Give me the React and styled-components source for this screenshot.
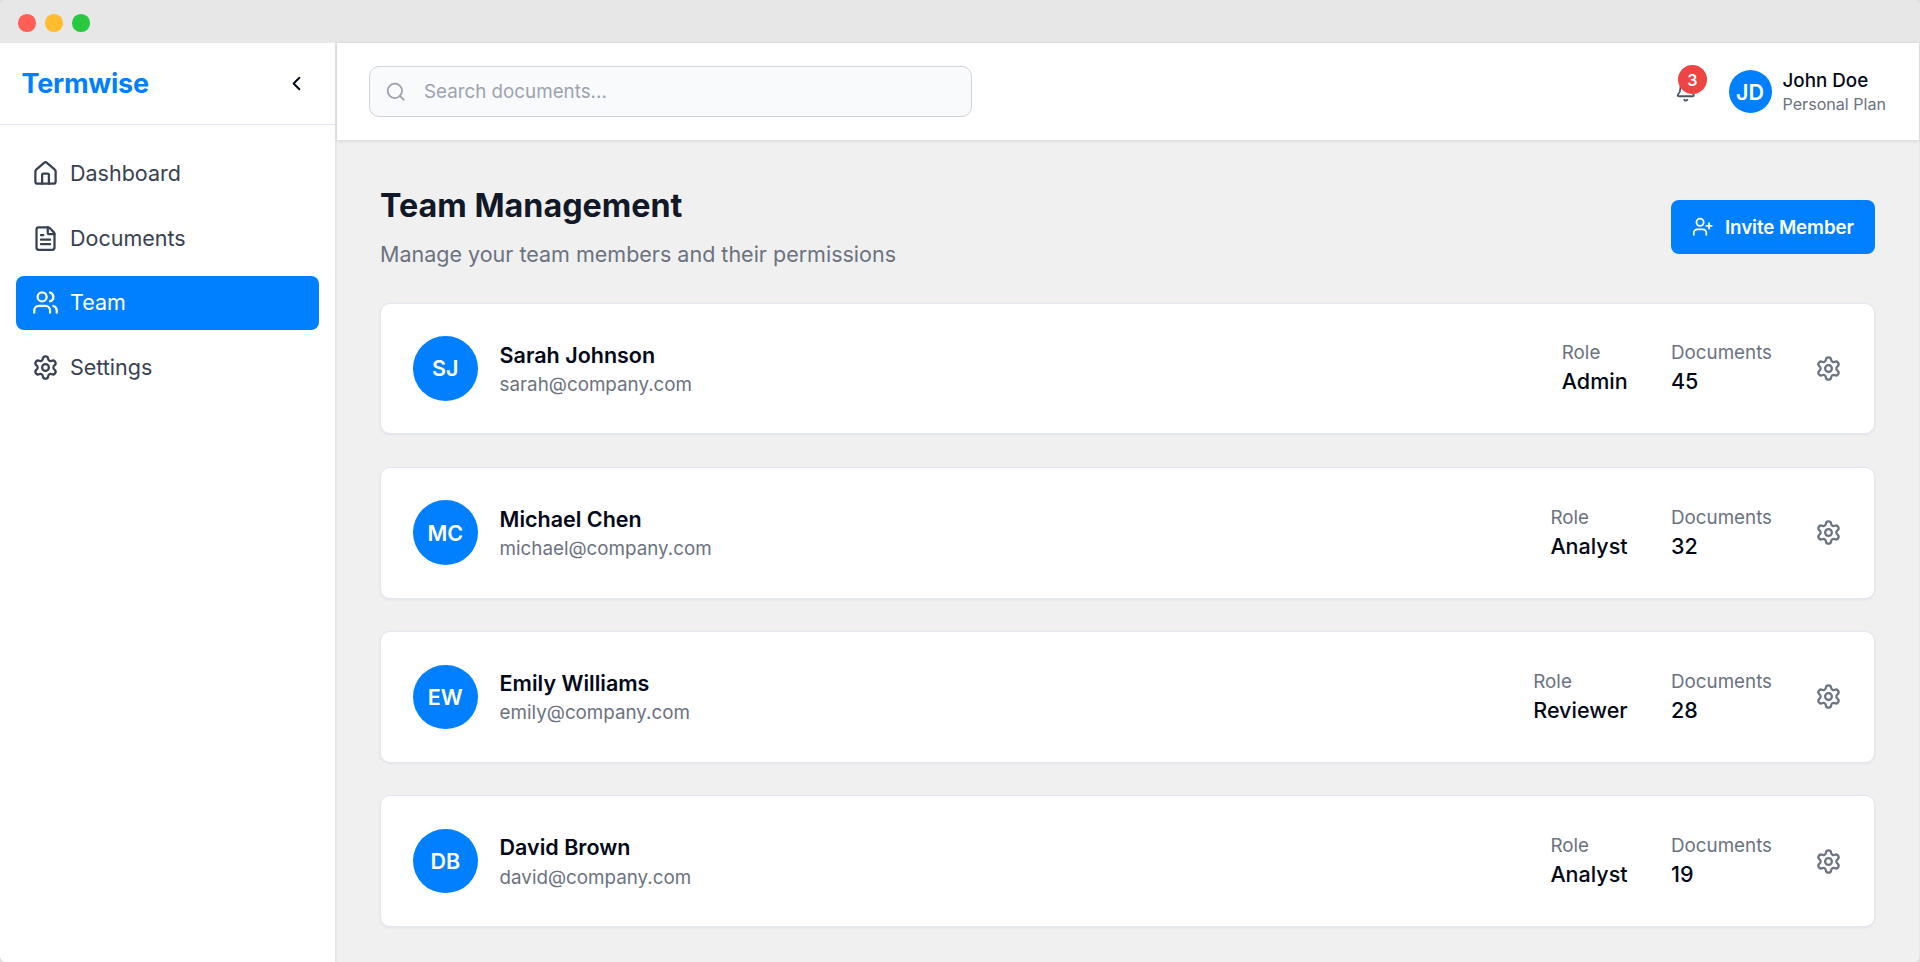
import React from 'react';
import styled, { createGlobalStyle } from 'styled-components';
import {
    House,
    FileText,
    Users,
    Settings,
    ChevronLeft,
    Search,
    Bell,
    UserPlus,
} from 'lucide-react';


const GlobalStyle = createGlobalStyle`
    * {
        box-sizing: border-box;
    }

    body {
        margin: 0;
        background: #dcdcdc;
        font-family: Inter, sans-serif;
        color: #020817;
        overflow: hidden;
    }

    button {
        font-family: inherit;
        border: none;
        background: none;
        padding: 0;
    }
`;

const Window = styled.div`
    display: flex;
    flex-direction: column;
    height: 962px;
    border-radius: 6px;
    overflow: hidden;
    background: #f0f0f0;
`;

const TitleBar = styled.div`
    display: flex;
    align-items: center;
    gap: 9.5px;
    flex: 0 0 43px;
    padding: 3px 0 0 18px;
    background: #e7e7e7;
`;

const Dot = styled.span`
    width: 17.5px;
    height: 17.5px;
    border-radius: 50%;
    background: ${(props) => props.$color};
`;

const Body = styled.div`
    display: flex;
    flex: 1;
    min-height: 0;
    border-right: 1px solid #e7e7e7;
`;

const Sidebar = styled.aside`
    flex: 0 0 337px;
    background: #fff;
    border-right: 2px solid #e5e7eb;
`;

const SidebarHeader = styled.div`
    display: flex;
    align-items: center;
    justify-content: space-between;
    height: 82px;
    padding: 0 27.3px 0 21.5px;
    border-bottom: 1px solid #e2e8f0;
`;

const Logo = styled.h1`
    margin: 0;
    font-size: 27px;
    line-height: 38px;
    font-weight: 700;
    letter-spacing: -0.25px;
    color: #007fff;
`;

const CollapseButton = styled.button`
    display: flex;
    color: #020817;
`;

const Nav = styled.nav`
    display: flex;
    flex-direction: column;
    gap: 10.8px;
    padding: 21.6px 16px;
`;

const NavItem = styled.a`
    display: flex;
    align-items: center;
    gap: 11px;
    height: 53.8px;
    padding: 0 16px;
    border-radius: 8px;
    font-size: 21.5px;
    line-height: 33px;
    color: ${(props) => (props.$active ? '#fff' : '#374151')};
    background: ${(props) => (props.$active ? '#007fff' : 'transparent')};
`;

const Main = styled.main`
    flex: 1;
    display: flex;
    flex-direction: column;
    min-width: 0;
`;

const Header = styled.header`
    display: flex;
    align-items: center;
    justify-content: space-between;
    flex: 0 0 97px;
    padding: 0 33px 0 32px;
    background: #fff;
    box-shadow: 0 1px 4px rgba(0, 0, 0, 0.12);
`;

const SearchBox = styled.div`
    display: flex;
    align-items: center;
    gap: 17.5px;
    width: 603px;
    height: 51px;
    padding: 0 15px;
    border: 1px solid #d1d5db;
    border-radius: 10px;
    background: #f9fafb;
    font-size: 18.8px;
    color: #9ca3af;
`;

const HeaderRight = styled.div`
    display: flex;
    align-items: center;
    gap: 32px;
`;

const BellButton = styled.button`
    position: relative;
    display: flex;
    color: #4b5563;
`;

const Badge = styled.span`
    position: absolute;
    top: -16px;
    right: -10.7px;
    width: 29.6px;
    height: 29.6px;
    border-radius: 50%;
    background: #ef4444;
    color: #fff;
    font-size: 16px;
    font-weight: 600;
    line-height: 30px;
    text-align: center;
`;

const Profile = styled.div`
    display: flex;
    align-items: center;
    gap: 11px;
`;

const Avatar = styled.div`
    display: flex;
    align-items: center;
    justify-content: center;
    flex: none;
    width: ${(props) => props.$size}px;
    height: ${(props) => props.$size}px;
    border-radius: 50%;
    background: #007fff;
    color: #fff;
    font-size: 21.5px;
    line-height: 32px;
    font-weight: 600;
`;

const ProfileName = styled.div`
    font-size: 18.8px;
    line-height: 27px;
    font-weight: 500;
`;

const ProfilePlan = styled.div`
    font-size: 16.1px;
    line-height: 21.5px;
    color: #6b7280;
`;

const Content = styled.section`
    padding: 43.7px 43.6px 43px 43px;
`;

const PageHeader = styled.div`
    display: flex;
    align-items: center;
    justify-content: space-between;
    margin-bottom: 31.9px;
`;

const PageTitle = styled.h2`
    margin: 0 0 11px;
    font-size: 32.3px;
    line-height: 43px;
    font-weight: 700;
    color: #111827;
`;

const PageText = styled.p`
    margin: 0;
    font-size: 21.5px;
    line-height: 33px;
    color: #6b7280;
`;

const InviteButton = styled.button`
    display: flex;
    align-items: center;
    gap: 11px;
    height: 53.8px;
    padding: 0 21.5px;
    border-radius: 8px;
    background: #007fff;
    color: #fff;
    font-size: 18.8px;
    font-weight: 600;
    letter-spacing: -0.1px;
`;

const MemberList = styled.div`
    display: flex;
    flex-direction: column;
    gap: 32.4px;
`;

const MemberCard = styled.div`
    display: flex;
    align-items: center;
    justify-content: space-between;
    height: 131.8px;
    padding: 0 32px;
    border: 1px solid #e2e8f0;
    border-radius: 10px;
    background: #fff;
    box-shadow: 0 1px 3px rgba(0, 0, 0, 0.06);
`;

const Person = styled.div`
    display: flex;
    align-items: center;
    gap: 22px;
`;

const Name = styled.div`
    font-size: 21.5px;
    line-height: 32.3px;
    font-weight: 600;
`;

const Muted = styled.div`
    font-size: 18.8px;
    line-height: 27px;
    color: #6b7280;
`;

const Meta = styled.div`
    display: flex;
    align-items: center;
    gap: 43.4px;
`;

const Value = styled.div`
    font-size: 21.5px;
    line-height: 31px;
    font-weight: 500;
`;

const GearButton = styled.button`
    display: flex;
    color: #6b7280;
`;


const navItems = [
    { label: 'Dashboard', Icon: House },
    { label: 'Documents', Icon: FileText },
    { label: 'Team', Icon: Users, active: true },
    { label: 'Settings', Icon: Settings },
];

const members = [
    { initials: 'SJ', name: 'Sarah Johnson', email: 'sarah@company.com', role: 'Admin', documents: 45 },
    { initials: 'MC', name: 'Michael Chen', email: 'michael@company.com', role: 'Analyst', documents: 32 },
    { initials: 'EW', name: 'Emily Williams', email: 'emily@company.com', role: 'Reviewer', documents: 28 },
    { initials: 'DB', name: 'David Brown', email: 'david@company.com', role: 'Analyst', documents: 19 },
];


const Member = ({ initials, name, email, role, documents }) => (
    <MemberCard>
        <Person>
            <Avatar $size={64.6}>{initials}</Avatar>
            <div>
                <Name>{name}</Name>
                <Muted>{email}</Muted>
            </div>
        </Person>

        <Meta>
            <div>
                <Muted>Role</Muted>
                <Value>{role}</Value>
            </div>
            <div>
                <Muted>Documents</Muted>
                <Value>{documents}</Value>
            </div>
            <GearButton>
                <Settings size={27} />
            </GearButton>
        </Meta>
    </MemberCard>
);


export default function App() {
    return (
        <Window>
            <GlobalStyle />

            <TitleBar>
                <Dot $color="#ff5f57" />
                <Dot $color="#febc2e" />
                <Dot $color="#28c840" />
            </TitleBar>

            <Body>
                <Sidebar>
                    <SidebarHeader>
                        <Logo>Termwise</Logo>
                        <CollapseButton>
                            <ChevronLeft size={23} />
                        </CollapseButton>
                    </SidebarHeader>

                    <Nav>
                        {navItems.map(({ label, Icon, active }) => (
                            <NavItem key={label} $active={active}>
                                <Icon size={27} />
                                {label}
                            </NavItem>
                        ))}
                    </Nav>
                </Sidebar>

                <Main>
                    <Header>
                        <SearchBox>
                            <Search size={21.5} />
                            Search documents...
                        </SearchBox>

                        <HeaderRight>
                            <BellButton>
                                <Bell size={21.5} />
                                <Badge>3</Badge>
                            </BellButton>
                            <Profile>
                                <Avatar $size={43}>JD</Avatar>
                                <div>
                                    <ProfileName>John Doe</ProfileName>
                                    <ProfilePlan>Personal Plan</ProfilePlan>
                                </div>
                            </Profile>
                        </HeaderRight>
                    </Header>

                    <Content>
                        <PageHeader>
                            <div>
                                <PageTitle>Team Management</PageTitle>
                                <PageText>Manage your team members and their permissions</PageText>
                            </div>
                            <InviteButton>
                                <UserPlus size={21.5} />
                                Invite Member
                            </InviteButton>
                        </PageHeader>

                        <MemberList>
                            {members.map((member) => (
                                <Member key={member.email} {...member} />
                            ))}
                        </MemberList>
                    </Content>
                </Main>
            </Body>
        </Window>
    );
}
